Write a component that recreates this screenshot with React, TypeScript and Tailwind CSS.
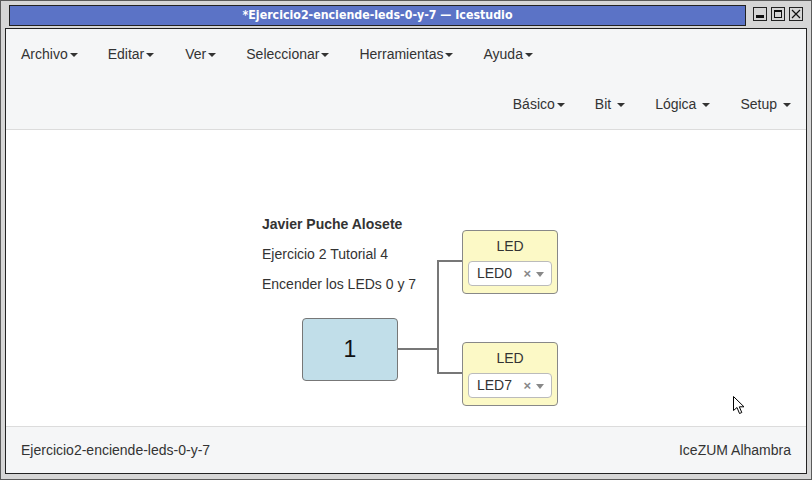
import React from 'react';

const Caret = ({ spaced = false }: { spaced?: boolean }) => (
  <span
    className={`inline-block w-0 h-0 align-middle border-t-[4px] border-t-[#333] border-x-[4px] border-x-transparent ${
      spaced ? 'ml-[6px]' : 'ml-[2px]'
    }`}
  />
);

const MenuItem = ({ label, spaced, wide }: { label: string; spaced?: boolean; wide?: boolean }) => (
  <div
    className={`pl-[15px] ${wide ? 'pr-[16px]' : 'pr-[15px]'} py-[15px] leading-[20px] text-[14px] text-[#333] whitespace-nowrap`}
  >
    {label}
    <Caret spaced={spaced} />
  </div>
);

const LedBlock = ({ name, top }: { name: string; top: string }) => (
  <div
    className={`absolute left-[456px] ${top} w-[96px] h-[64px] rounded-[4px] border border-[#888] bg-[#fcf9c6] flex flex-col items-center`}
  >
    <div className="mt-[5px] leading-[20px] text-[14px] text-[#333]">LED</div>
    <div className="mt-[5px] w-[84px] h-[25px] rounded-[4px] border border-[#bbb] bg-white flex items-center pl-[8px] pr-[7px]">
      <span className="text-[14px] text-[#333] flex-1">{name}</span>
      <span className="text-[13px] text-[#888] font-bold leading-none mr-[5px]">×</span>
      <span className="inline-block w-0 h-0 border-t-[5px] border-t-[#888] border-x-[4px] border-x-transparent mt-[2px]" />
    </div>
  </div>
);

export default function App() {
  return (
    <div className="w-[812px] h-[480px] bg-[#d6d6d6] border border-[#5a5a5a] overflow-hidden font-['Liberation_Sans',Arial,sans-serif]">
      {/* Window title */}
      <div className="flex items-start h-[26px]">
        <div className="ml-[8px] mt-[4px] w-[737px] h-[21px] bg-[#5b73c6] border border-[#222] flex items-center justify-center">
          <span className="font-['DejaVu_Sans_Condensed','DejaVu_Sans',sans-serif] font-bold text-[12.3px] text-white">
            *Ejercicio2-enciende-leds-0-y-7 — Icestudio
          </span>
        </div>
        <div className="ml-[7px] mt-[6px] flex gap-[4px]">
          <div className="w-[14px] h-[14px] border border-[#222] bg-[#d6d6d6] flex items-end justify-center pb-[2px]">
            <div className="w-[8px] h-[3px] bg-[#111]" />
          </div>
          <div className="w-[14px] h-[14px] border border-[#222] bg-[#d6d6d6] flex items-center justify-center">
            <div className="w-[8px] h-[8px] border border-[#111] border-t-[2px]" />
          </div>
          <div className="w-[14px] h-[14px] border border-[#222] bg-[#d6d6d6] flex items-center justify-center">
            <svg width="10" height="10" viewBox="0 0 10 10">
              <path d="M1 1 L9 9 M9 1 L1 9" stroke="#111" strokeWidth="1.2" />
            </svg>
          </div>
        </div>
      </div>

      {/* Main window */}
      <div className="ml-[4px] mt-[1px] w-[802px] h-[446px] border border-[#222] flex flex-col bg-white">
        {/* Menus */}
        <div className="h-[101px] bg-[#f5f6f7] border-b border-[#dcdcdc] flex flex-col">
          <div className="flex">
            <MenuItem label="Archivo" />
            <MenuItem label="Editar" wide />
            <MenuItem label="Ver" />
            <MenuItem label="Seleccionar" />
            <MenuItem label="Herramientas" />
            <MenuItem label="Ayuda" />
          </div>
          <div className="flex justify-end">
            <MenuItem label="Básico" />
            <MenuItem label="Bit" spaced />
            <MenuItem label="Lógica" spaced />
            <MenuItem label="Setup" spaced />
          </div>
        </div>

        {/* Canvas */}
        <div className="relative flex-1 bg-white">
          <div className="absolute left-[256px] top-[79px] text-[14px] leading-[30px] text-[#333]">
            <div className="font-bold">Javier Puche Alosete</div>
            <div>Ejercicio 2 Tutorial 4</div>
            <div>Encender los LEDs 0 y 7</div>
          </div>

          <svg className="absolute inset-0" width="800" height="296">
            <path
              d="M391 219 H432 M432 130 V244 M431 131 H457 M431 243 H457"
              stroke="#777"
              strokeWidth="2"
              fill="none"
            />
          </svg>

          <div className="absolute left-[296px] top-[188px] w-[96px] h-[63px] rounded-[4px] border border-[#777] bg-[#c1dee9] flex items-center justify-center">
            <span className="text-[23px] text-[#111]">1</span>
          </div>

          <LedBlock name="LED0" top="top-[100px]" />
          <LedBlock name="LED7" top="top-[212px]" />

          {/* Mouse pointer */}
          <svg className="absolute left-[727px] top-[266px]" width="14" height="20" viewBox="0 0 14 20">
            <path
              d="M0.5 0.5 L0.5 14.5 L4 11.5 L6.5 17.5 L8.8 16.5 L6.3 10.8 L11 10.8 Z"
              fill="white"
              stroke="black"
              strokeWidth="1"
              strokeLinejoin="round"
            />
          </svg>
        </div>

        {/* Footer */}
        <div className="h-[47px] bg-[#f5f6f7] border-t border-[#dcdcdc] flex items-center justify-between px-[15px] text-[14px] text-[#333]">
          <span>Ejercicio2-enciende-leds-0-y-7</span>
          <span>IceZUM Alhambra</span>
        </div>
      </div>
    </div>
  );
}
